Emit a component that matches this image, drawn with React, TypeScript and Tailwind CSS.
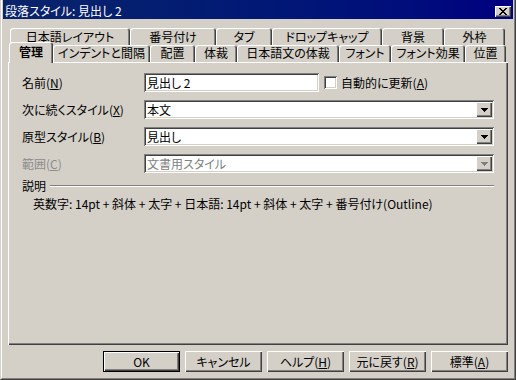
import React from "react";

const raised =
  "shadow-[inset_1px_1px_0_#ffffff,inset_-1px_-1px_0_#404040,inset_-2px_-2px_0_#808080]";
const sunken =
  "shadow-[inset_1px_1px_0_#808080,inset_-1px_-1px_0_#ffffff,inset_2px_2px_0_#404040,inset_-2px_-2px_0_#d4d0c8]";
const tabEdge =
  "rounded-t-[3px] shadow-[inset_1px_1px_0_#ffffff,inset_-1px_0_0_#404040,inset_-2px_0_0_#808080]";

const topTabs = [
  { label: "日本語レイアウト", w: "w-[120px]" },
  { label: "番号付け", w: "w-[86px]" },
  { label: "タブ", w: "w-[56px]" },
  { label: "ドロップキャップ", w: "w-[110px]" },
  { label: "背景", w: "w-[62px]" },
  { label: "外枠", w: "w-[61px]" },
];

const bottomTabs = [
  { label: "インデントと間隔", w: "w-[97px]" },
  { label: "配置", w: "w-[45px]" },
  { label: "体裁", w: "w-[42px]" },
  { label: "日本語文の体裁", w: "w-[102px]" },
  { label: "フォント", w: "w-[52px]" },
  { label: "フォント効果", w: "w-[74px]" },
  { label: "位置", w: "w-[41px]" },
];

function CloseGlyph() {
  // 8x7 pixel "x" like the classic caption button
  const px = [
    [0, 0], [1, 0], [6, 0], [7, 0],
    [1, 1], [2, 1], [5, 1], [6, 1],
    [2, 2], [3, 2], [4, 2], [5, 2],
    [3, 3], [4, 3],
    [2, 4], [3, 4], [4, 4], [5, 4],
    [1, 5], [2, 5], [5, 5], [6, 5],
    [0, 6], [1, 6], [6, 6], [7, 6],
  ];
  return (
    <svg width="8" height="7" viewBox="0 0 8 7" shapeRendering="crispEdges">
      {px.map(([x, y]) => (
        <rect key={`${x}-${y}`} x={x} y={y} width="1" height="1" fill="#000" />
      ))}
    </svg>
  );
}

function Arrow({ disabled }: { disabled?: boolean }) {
  const c = disabled ? "#808080" : "#000";
  return (
    <svg width="7" height="4" viewBox="0 0 7 4" shapeRendering="crispEdges">
      <rect x="0" y="0" width="7" height="1" fill={c} />
      <rect x="1" y="1" width="5" height="1" fill={c} />
      <rect x="2" y="2" width="3" height="1" fill={c} />
      <rect x="3" y="3" width="1" height="1" fill={c} />
    </svg>
  );
}

function Combo({ value, disabled }: { value: string; disabled?: boolean }) {
  return (
    <div className={`w-[350px] h-[19px] bg-white flex items-center ${sunken}`}>
      <span
        className={`flex-1 pl-[3px] leading-[14px] ${disabled ? "text-[#808080]" : "text-black"}`}
      >
        {value}
      </span>
      <div
        className={`w-[16px] h-[15px] mr-[2px] bg-[#d4d0c8] flex items-center justify-center ${raised}`}
      >
        <Arrow disabled={disabled} />
      </div>
    </div>
  );
}

function Label({ text, acc, disabled }: { text: string; acc: string; disabled?: boolean }) {
  return (
    <div className={`w-[122px] leading-[14px] ${disabled ? "text-[#8c8c8c]" : "text-black"}`}>
      {text}(<span className="underline underline-offset-1">{acc}</span>)
    </div>
  );
}

function Button({ children, isDefault }: { children: React.ReactNode; isDefault?: boolean }) {
  return (
    <div
      className={`w-[77px] h-[21px] flex items-center justify-center leading-[14px] text-black ${
        isDefault ? "border border-black" : ""
      } ${raised}`}
    >
      {children}
    </div>
  );
}

export default function App() {
  return (
    <div className="w-[516px] h-[380px] bg-[#d4d0c8] border-l border-r border-b border-l-[#d4d0c8] border-r-[#404040] border-b-[#404040] font-['MS_UI_Gothic','Noto_Sans_CJK_JP',sans-serif] [font-feature-settings:'palt'] text-[12px] select-none">
      <div className="h-full border-l border-r border-b border-l-white border-r-[#808080] border-b-[#808080] px-[1px] pb-[1px] flex flex-col">
        {/* Title bar */}
        <div className="h-[19px] bg-gradient-to-r from-[#0a246a] to-[#000080] flex items-end justify-between pl-[2px] pr-[2px]">
          <span className="text-white leading-[13px] mb-[2px]">段落スタイル: 見出し 2</span>
          <div className={`w-[16px] h-[11px] mb-[2px] bg-[#d4d0c8] flex items-center justify-center ${raised}`}>
            <CloseGlyph />
          </div>
        </div>

        {/* Tab rows */}
        <div className="mt-[9px] flex h-[18px] ml-[7px]">
          {topTabs.map((t) => (
            <div
              key={t.label}
              className={`${t.w} h-[18px] flex justify-center pt-[2px] leading-[14px] text-black whitespace-nowrap ${tabEdge}`}
            >
              {t.label}
            </div>
          ))}
        </div>
        <div className="-mt-[1px] flex items-end h-[17px] ml-[6px] relative">
          <div
            className={`w-[44px] h-[21px] -mb-[1px] relative z-10 bg-[#d4d0c8] flex justify-center pt-[3px] leading-[14px] font-bold text-black ${tabEdge}`}
          >
            管理
          </div>
          {bottomTabs.map((t) => (
            <div
              key={t.label}
              className={`${t.w} h-[17px] bg-[#d4d0c8] flex justify-center pt-[1px] leading-[14px] text-black whitespace-nowrap ${tabEdge}`}
            >
              {t.label}
            </div>
          ))}
        </div>

        {/* Tab page */}
        <div
          className={`ml-[5px] w-[500px] h-[283px] pl-[14px] pt-[11px] flex flex-col ${raised}`}
        >
          <div className="flex flex-col gap-[8px]">
            <div className="flex items-center h-[19px]">
              <Label text="名前" acc="N" />
              <div className={`w-[175px] h-[19px] bg-white flex items-center pl-[3px] leading-[14px] ${sunken}`}>
                見出し 2
              </div>
              <div className={`w-[13px] h-[13px] ml-[5px] bg-white ${sunken}`} />
              <span className="ml-[4px] leading-[14px]">
                自動的に更新(<span className="underline underline-offset-1">A</span>)
              </span>
            </div>
            <div className="flex items-center h-[19px]">
              <Label text="次に続くスタイル" acc="X" />
              <Combo value="本文" />
            </div>
            <div className="flex items-center h-[19px]">
              <Label text="原型スタイル" acc="B" />
              <Combo value="見出し" />
            </div>
            <div className="flex items-center h-[19px]">
              <Label text="範囲" acc="C" disabled />
              <Combo value="文書用スタイル" disabled />
            </div>
          </div>

          <div className="mt-[6px] h-[14px] w-[472px] flex items-center">
            <span className="leading-[14px]">説明</span>
            <div className="flex-1 ml-[4px] h-[2px] border-t border-t-[#808080] border-b border-b-white" />
          </div>
          <div className="mt-[4px] pl-[11px] leading-[14px]">
            英数字: 14pt + 斜体 + 太字 + 日本語: 14pt + 斜体 + 太字 + 番号付け(Outline)
          </div>
        </div>

        {/* Buttons */}
        <div className="mt-[6px] flex justify-end gap-[5px] pr-[5px]">
          <Button isDefault>OK</Button>
          <Button>キャンセル</Button>
          <Button>
            ヘルプ(<span className="underline underline-offset-1">H</span>)
          </Button>
          <Button>
            元に戻す(<span className="underline underline-offset-1">R</span>)
          </Button>
          <Button>
            標準(<span className="underline underline-offset-1">A</span>)
          </Button>
        </div>
      </div>
    </div>
  );
}
